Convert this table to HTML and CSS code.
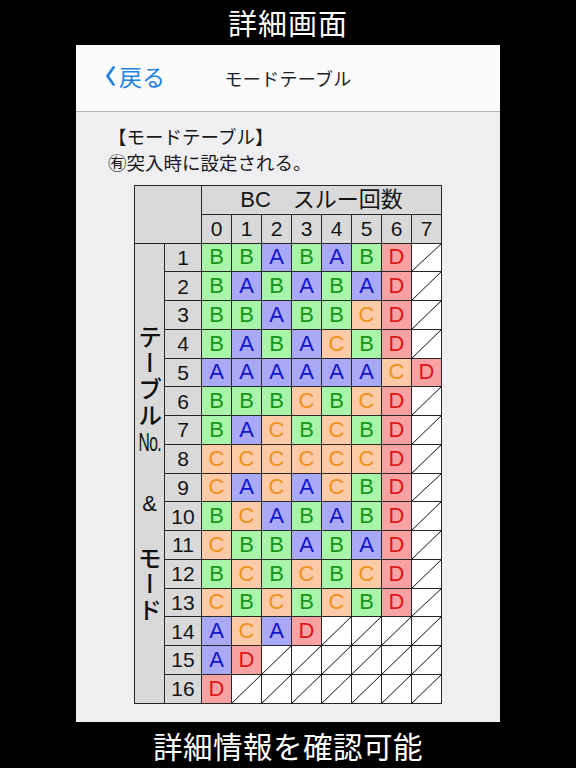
FILE: index.html
```html
<!DOCTYPE html>
<html lang="ja">
<head>
<meta charset="utf-8">
<title>詳細画面</title>
<link rel="stylesheet" href="styles.css">
</head>
<body>
<div class="page">
  <h1 class="caption caption-top">詳細画面</h1>
  <div class="screen">
    <div class="navbar">
      <div class="nav-left">
        <a class="back">
          <svg class="chev" width="10" height="20" viewBox="0 0 10 20"><polyline points="8.5,1.5 2.5,10 8.5,18.5" fill="none" stroke="currentColor" stroke-width="2.8" stroke-linecap="round" stroke-linejoin="round"/></svg>
          <span>戻る</span>
        </a>
      </div>
      <div class="nav-title">モードテーブル</div>
      <div class="nav-right"></div>
    </div>
    <div class="content">
      <p class="note">【モードテーブル】</p>
      <p class="note">㊒突入時に設定される。</p>
      <div class="table-wrap">
        <div class="mode-table" id="modeTable">
          <div class="cell head corner"></div>
          <div class="cell head title">BC　スルー回数</div>
          <div class="cell head num">0</div>
          <div class="cell head num">1</div>
          <div class="cell head num">2</div>
          <div class="cell head num">3</div>
          <div class="cell head num">4</div>
          <div class="cell head num">5</div>
          <div class="cell head num">6</div>
          <div class="cell head num">7</div>
          <div class="cell head side">
            <span class="ch">テ</span><span class="ch">ー</span><span class="ch">ブ</span><span class="ch">ル</span><span class="no">No.</span><span class="amp">&amp;</span><span class="ch">モ</span><span class="ch">ー</span><span class="ch">ド</span>
          </div>
        </div>
      </div>
    </div>
  </div>
  <p class="caption caption-bottom">詳細情報を確認可能</p>
</div>
<script src="script.js"></script>
</body>
</html>
```

FILE: script.js
```js
(function () {
  var rows = [
    "BBABABD-",
    "BABABAD-",
    "BBABBCD-",
    "BABACBD-",
    "AAAAAACD",
    "BBBCBCD-",
    "BACBCBD-",
    "CCCCCCD-",
    "CACACBD-",
    "BCABABD-",
    "CBBABAD-",
    "BCBCBCD-",
    "CBCBCBD-",
    "ACAD----",
    "AD------",
    "D-------"
  ];
  var t = document.getElementById("modeTable");
  rows.forEach(function (r, i) {
    var n = document.createElement("div");
    n.className = "cell head rownum";
    n.style.gridRow = String(i + 3);
    n.textContent = String(i + 1);
    t.appendChild(n);
    for (var j = 0; j < 8; j++) {
      var c = document.createElement("div");
      var ch = r.charAt(j);
      c.style.gridRow = String(i + 3);
      c.style.gridColumn = String(j + 3);
      if (ch === "-") {
        c.className = "cell empty";
      } else {
        c.className = "cell mode m" + ch;
        c.textContent = ch;
      }
      t.appendChild(c);
    }
  });
})();
```

FILE: styles.css
```css
* { box-sizing: border-box; }
html, body { margin: 0; padding: 0; background: #000; }
body {
  width: 576px;
  height: 768px;
  overflow: hidden;
  font-family: "Noto Sans CJK JP", "Liberation Sans", sans-serif;
}
.page {
  display: flex;
  flex-direction: column;
  align-items: center;
}
.caption {
  margin: 0;
  color: #fff;
  font-weight: 400;
  font-size: 29px;
  letter-spacing: 1px;
  text-align: center;
}
.caption-top {
  height: 45px;
  line-height: 45px;
}
.caption-bottom {
  height: 46px;
  line-height: 46px;
  font-size: 29.5px;
  letter-spacing: 0.5px;
}
.screen {
  width: 424px;
  height: 677px;
  background: #efeff2;
  display: flex;
  flex-direction: column;
}
.navbar {
  height: 67px;
  flex: none;
  background: #fafafa;
  border-bottom: 1px solid #b4b4b8;
  display: grid;
  grid-template-columns: 1fr auto 1fr;
  align-items: center;
}
.nav-left { padding-left: 29px; }
.back {
  display: inline-flex;
  align-items: center;
  gap: 4px;
  color: #2583e0;
  font-size: 23px;
  line-height: 1;
}
.chev { display: block; }
.nav-title {
  font-size: 18px;
  color: #222;
  letter-spacing: 0.3px;
}
.content {
  padding: 11px 0 0 32px;
}
.note {
  margin: 0;
  font-size: 18.5px;
  line-height: 26px;
  color: #1a1a1a;
}
.table-wrap {
  margin: 10px 0 0 -32px;
  display: flex;
  justify-content: center;
}
.mode-table {
  display: grid;
  grid-template-columns: 29px 36px repeat(8, 29px);
  grid-template-rows: repeat(18, 27.75px);
  gap: 1px;
  padding: 1px;
  background: #262626;
  font-family: "Liberation Sans", "Noto Sans CJK JP", sans-serif;
}
.cell {
  display: flex;
  align-items: center;
  justify-content: center;
  font-size: 21px;
  line-height: 1;
}
.head {
  background: #d9d9d9;
  color: #141414;
}
.corner {
  grid-column: 1 / span 2;
  grid-row: 1 / span 2;
}
.title {
  grid-column: 3 / span 8;
  grid-row: 1;
  font-size: 22px;
  padding-top: 1px;
}
.num { grid-row: 2; }
.rownum { grid-column: 2; }
.side {
  grid-column: 1;
  grid-row: 3 / span 16;
  flex-direction: column;
  font-family: "Noto Sans CJK JP", sans-serif;
  font-size: 24px;
  font-weight: 500;
  color: #111;
}
.side .ch {
  display: block;
  writing-mode: vertical-rl;
  width: 28px;
  height: 26px;
  line-height: 28px;
  text-align: center;
  overflow: visible;
}
.side .no {
  display: block;
  height: 28px;
  line-height: 28px;
  font-family: "Liberation Sans", sans-serif;
  font-size: 26px;
  font-weight: 400;
  letter-spacing: -1px;
  transform: scaleX(0.6);
  white-space: nowrap;
}
.side .amp {
  display: block;
  height: 26px;
  line-height: 26px;
  font-family: "Liberation Sans", sans-serif;
  font-size: 22px;
  font-weight: 400;
  margin: 35px 0 28px;
}
.mode { font-size: 22px; }
.mA { background: #a9a9f6; color: #1414cc; }
.mB { background: #a8f4a8; color: #17961a; }
.mC { background: #fccaa6; color: #f0901c; }
.mD { background: #f7a3a3; color: #e01616; }
.empty {
  background:
    linear-gradient(to bottom right, transparent calc(50% - 0.8px), #222 50%, transparent calc(50% + 0.8px)),
    #fff;
}
```
